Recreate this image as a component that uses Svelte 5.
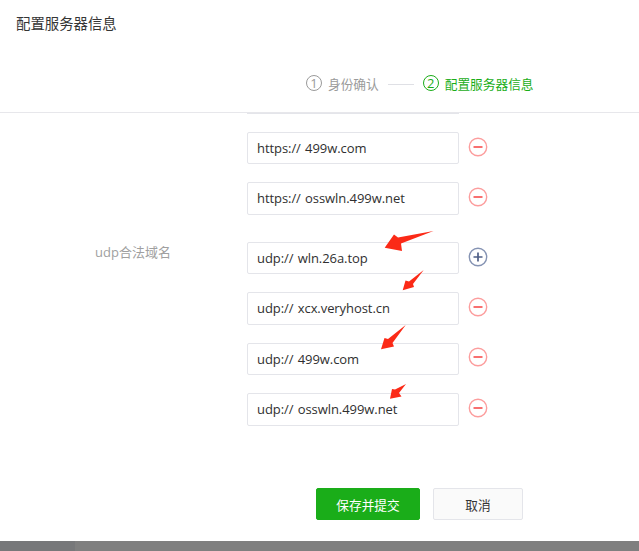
<script>
  const groups = [
    { label: '', rows: [
      { proto: 'https://', host: '499w.com', add: false },
      { proto: 'https://', host: 'osswln.499w.net', add: false }
    ]},
    { label: 'udp合法域名', rows: [
      { proto: 'udp://', host: 'wln.26a.top', add: true },
      { proto: 'udp://', host: 'xcx.veryhost.cn', add: false },
      { proto: 'udp://', host: '499w.com', add: false },
      { proto: 'udp://', host: 'osswln.499w.net', add: false }
    ]}
  ];
  const arrows = [
    '384.7,247.7 394,234.5 398,237.5 433.5,231 401,243.5 402,251',
    '402.7,290.3 405.5,280.5 409,281.5 423.7,270 413,284 414,287',
    '381,349.3 384.5,338 388,339 405.7,325 392.5,343 394,346.5',
    '390,398.7 392,389 395,389.5 406,384 399,393 401.5,396.5'
  ];
</script>

<div class="page">
  <header class="head">
    <h1 class="title">配置服务器信息</h1>
    <div class="steps">
      <span class="step">
        <span class="num">1</span>身份确认
      </span>
      <span class="link"></span>
      <span class="step on">
        <span class="num">2</span>配置服务器信息
      </span>
    </div>
  </header>

  <main class="body">
    <div class="clipped"></div>
    {#each groups as g}
      <section class="group">
        <div class="label">{g.label}</div>
        <div class="rows">
          {#each g.rows as r}
            <div class="row">
              <div class="input"><span>{r.proto}</span> <span>{r.host}</span></div>
              {#if r.add}
                <svg class="ic" viewBox="0 0 20 20" aria-hidden="true">
                  <circle cx="10" cy="10" r="8.7" fill="none" stroke="#8593b3" stroke-width="1.4"/>
                  <path d="M5.5 10h9M10 5.5v9" stroke="#4f5f86" stroke-width="1.7"/>
                </svg>
              {:else}
                <svg class="ic" viewBox="0 0 20 20" aria-hidden="true">
                  <circle cx="10" cy="10" r="8.7" fill="none" stroke="#fc9d9d" stroke-width="1.4"/>
                  <path d="M5.5 10h9" stroke="#f86060" stroke-width="1.8"/>
                </svg>
              {/if}
            </div>
          {/each}
        </div>
      </section>
    {/each}
  </main>

  <footer class="foot">
    <button class="btn primary">保存并提交</button>
    <button class="btn">取消</button>
  </footer>

  <div class="bottom"><div class="bottom-l"></div></div>

  <svg class="arrows" viewBox="0 0 639 551" aria-hidden="true">
    {#each arrows as p}
      <polygon points={p} fill="#fb2a17"/>
    {/each}
  </svg>
</div>

<style>
  :global(body) {
    margin: 0;
    background: #fff;
  }
  .page {
    position: relative;
    width: 639px;
    height: 551px;
    overflow: hidden;
    display: flex;
    flex-direction: column;
    font-family: "Open Sans", "Noto Sans CJK SC", sans-serif;
    color: #353535;
    font-size: 13px;
  }
  .head {
    height: 112px;
    flex: none;
    border-bottom: 1px solid #e7e7eb;
    display: flex;
    flex-direction: column;
    box-sizing: content-box;
  }
  .title {
    margin: 0;
    padding: 14px 0 0 16px;
    font-size: 14.4px;
    line-height: 20px;
    font-weight: 400;
    color: #353535;
  }
  .steps {
    margin-top: 39px;
    padding-left: 306px;
    height: 20px;
    display: flex;
    align-items: center;
    font-size: 12.7px;
    color: #9a9a9a;
  }
  .step {
    display: flex;
    align-items: center;
    gap: 6px;
  }
  .step.on {
    color: #1aad19;
  }
  .num {
    width: 14px;
    height: 14px;
    border: 1px solid currentColor;
    border-radius: 50%;
    display: flex;
    align-items: center;
    justify-content: center;
    font-size: 13px;
    line-height: 1;
    box-sizing: content-box;
  }
  .link {
    width: 26px;
    height: 1px;
    margin: 2px 9px 0;
    background: #dfe0e5;
  }
  .body {
    position: relative;
    height: 350px;
    flex: none;
    padding-top: 19px;
    box-sizing: border-box;
    display: flex;
    flex-direction: column;
    gap: 27.2px;
  }
  .clipped {
    position: absolute;
    left: 247px;
    top: 0;
    width: 212px;
    height: 1px;
    background: #e4e5ea;
  }
  .group {
    display: flex;
    align-items: flex-start;
  }
  .label {
    width: 171px;
    flex: none;
    text-align: right;
    font-size: 13px;
    line-height: 20px;
    color: #a0a0a0;
  }
  .rows {
    margin-left: 76px;
    display: flex;
    flex-direction: column;
    gap: 18px;
  }
  .row {
    display: flex;
    align-items: center;
    gap: 9px;
  }
  .input {
    width: 212px;
    height: 32.4px;
    box-sizing: border-box;
    border: 1px solid #e4e5ea;
    border-radius: 2px;
    padding-left: 9px;
    line-height: 31px;
    white-space: pre;
    font-size: 13px;
    letter-spacing: -0.07px;
    word-spacing: 1px;
    color: #303030;
    background: #fff;
  }
  .ic {
    width: 20px;
    height: 20px;
    flex: none;
    margin-bottom: 3px;
  }
  .foot {
    height: 78px;
    flex: none;
    padding: 25px 0 0 316px;
    box-sizing: border-box;
    display: flex;
    gap: 13px;
    align-items: flex-start;
  }
  .btn {
    width: 90px;
    height: 32px;
    padding: 0;
    border: 1px solid #e4e5ea;
    border-radius: 2px;
    background: #fafafa;
    color: #353535;
    font: inherit;
    font-size: 12.7px;
  }
  .primary {
    width: 104px;
    border-color: #1aad19;
    background: #1aad19;
    color: #fff;
  }
  .bottom {
    flex: 1;
    background: #7f7f7f;
  }
  .bottom-l {
    width: 75px;
    height: 100%;
    background: #77787a;
  }
  .arrows {
    position: absolute;
    inset: 0;
    width: 639px;
    height: 551px;
    pointer-events: none;
  }
</style>
